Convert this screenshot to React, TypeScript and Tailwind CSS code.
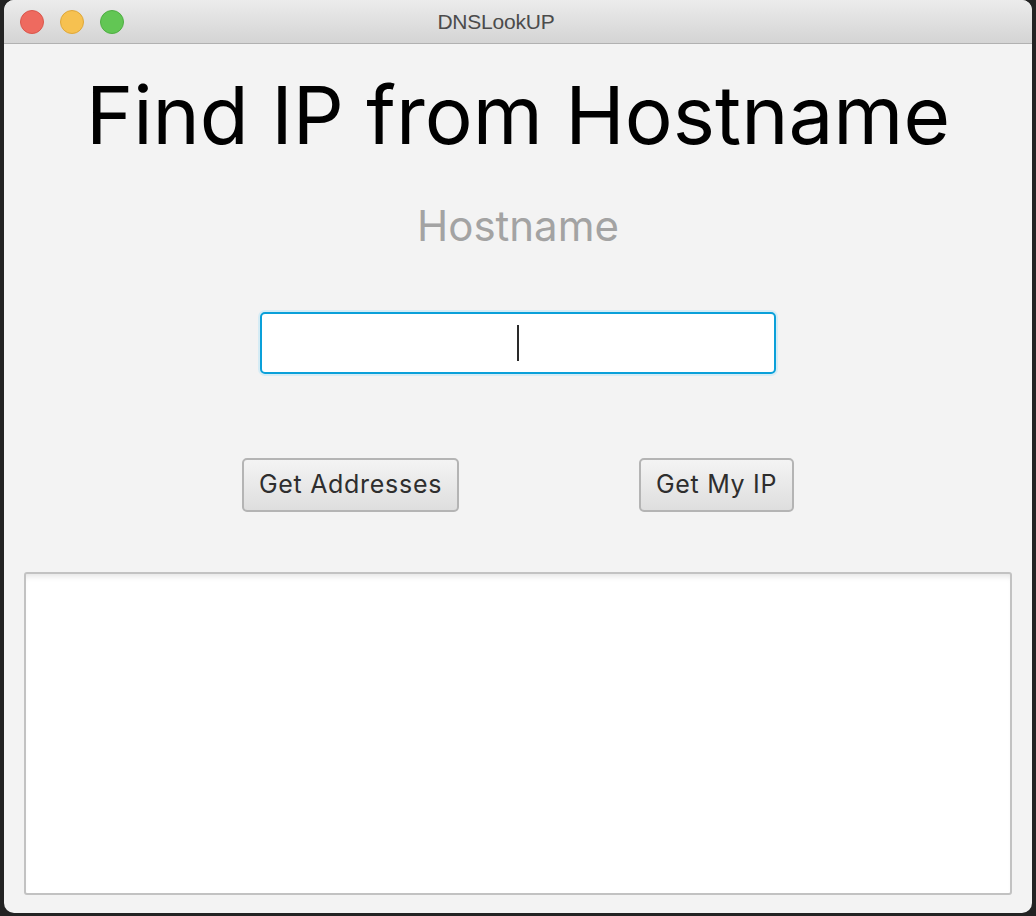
import React from "react";

const App = () => {
  return (
    <div className="w-[1036px] h-[916px] bg-[#232323] overflow-hidden">
      <div className="ml-[4px] w-[1028px] h-[913px] rounded-[10px] bg-[#f3f3f3] overflow-hidden flex flex-col font-['Inter',sans-serif]">
        {/* title bar */}
        <div className="relative h-[44px] shrink-0 bg-gradient-to-b from-[#ececec] to-[#d4d4d4] border-b border-[#b1b1b1] flex items-center">
          <div className="flex items-center gap-[16px] pl-[16px]">
            <span className="w-[24px] h-[24px] rounded-full bg-[#ee6a5f] border border-[#d9574c]" />
            <span className="w-[24px] h-[24px] rounded-full bg-[#f6c150] border border-[#dea73a]" />
            <span className="w-[24px] h-[24px] rounded-full bg-[#62c654] border border-[#4fae43]" />
          </div>
          <div className="absolute inset-0 pr-[44px] flex items-center justify-center text-[21px] text-[#4b4b4b] font-['Liberation_Sans',sans-serif] tracking-[-0.2px]">
            DNSLookUP
          </div>
        </div>

        {/* content */}
        <div className="flex flex-col items-center flex-1">
          <h1 className="mt-[25px] text-[80px] leading-[92px] text-black">
            Find IP from Hostname
          </h1>
          <div className="mt-[41px] text-[42px] leading-[48px] text-[#a3a3a3]">
            Hostname
          </div>
          <div className="mt-[62px] w-[516px] h-[62px] rounded-[5px] border-2 border-[#0aa0d9] bg-white shadow-[0_0_0_2px_#d6ecf5] flex items-center justify-center">
            <span className="w-[2px] h-[36px] bg-[#2a2a2a]" />
          </div>
          <div className="mt-[84px] flex w-[552px] justify-between">
            <button className="w-[217px] h-[54px] rounded-[5px] border-2 border-[#b4b4b4] bg-gradient-to-b from-[#f4f4f4] to-[#dedede] text-[25px] tracking-[0.7px] text-[#2e2e2e]">
              Get Addresses
            </button>
            <button className="w-[155px] h-[54px] rounded-[5px] border-2 border-[#b4b4b4] bg-gradient-to-b from-[#f4f4f4] to-[#dedede] text-[25px] tracking-[0.7px] text-[#2e2e2e]">
              Get My IP
            </button>
          </div>
          <div className="mt-[60px] w-[988px] h-[323px] ml-[20px] self-start border-2 border-[#c2c2c2] rounded-[3px] bg-white shadow-[inset_0_6px_6px_-4px_rgba(0,0,0,0.12)]" />
        </div>
      </div>
    </div>
  );
};

export default App;
